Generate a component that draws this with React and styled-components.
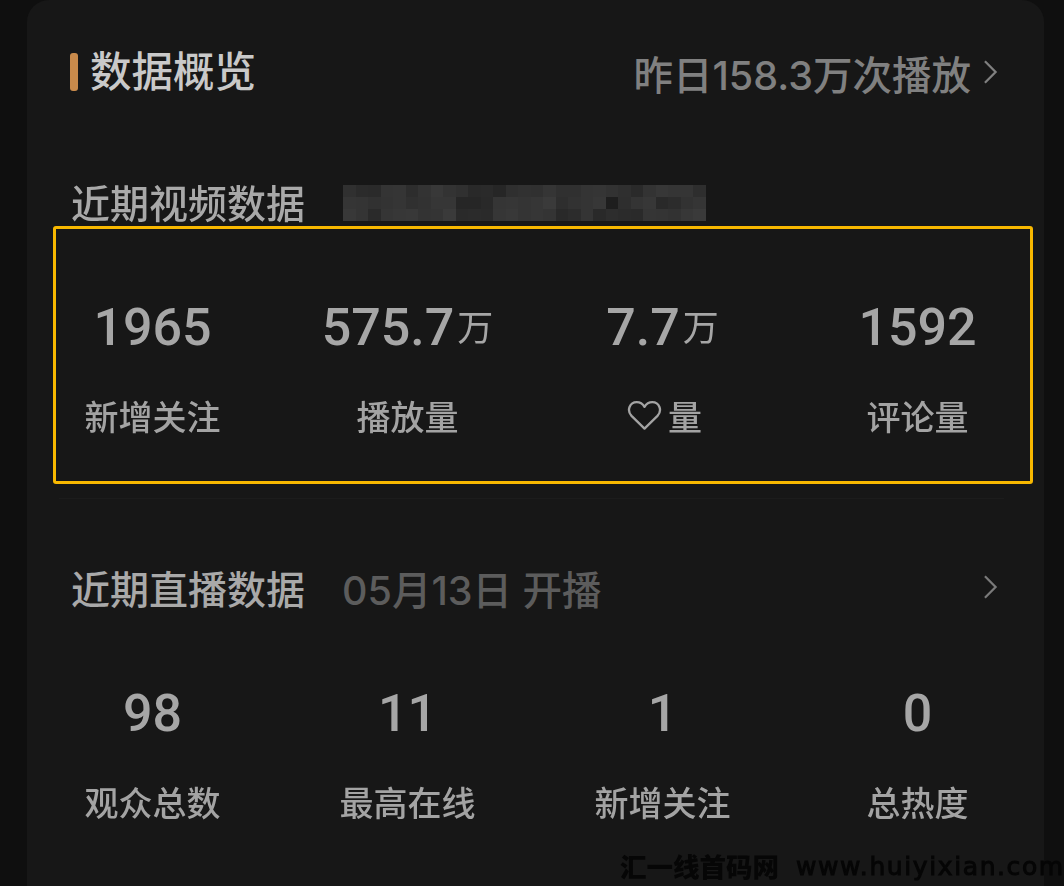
import styled, { createGlobalStyle } from "styled-components";

const GlobalStyle = createGlobalStyle`
  html, body {
    margin: 0;
    padding: 0;
    background: #0f0f0f;
  }
  body {
    font-family: "Inter", "Noto Sans CJK SC", sans-serif;
  }
`

const videoStats = [
  { value: "1965", label: "新增关注" },
  { value: "575.7", unit: "万", label: "播放量" },
  { value: "7.7", unit: "万", label: "量", heart: true },
  { value: "1592", label: "评论量" },
]

const liveStats = [
  { value: "98", label: "观众总数" },
  { value: "11", label: "最高在线" },
  { value: "1", label: "新增关注" },
  { value: "0", label: "总热度" },
]

// shades of the pixelated account name, 29 x 3 cells
const mosaic = [
  "302b2a34352d33383330292a262f31303530303435322f2a333735352e",
  "353431333530323636262629353634363a2e3234371e2e3437292c3235",
  "38342a3537383334 3a2a2b2a3638343634292c34292d2b2a353432373a",
]

const shades = mosaic.flatMap((row) => row.replace(/ /g, "").match(/../g).map((hex) => "#" + hex + hex + hex))

const Chevron = () => (
  <ChevronIcon viewBox="0 0 16 28" fill="none">
    <path d="M2 2.5 L13.5 14 L2 25.5" stroke="currentColor" strokeWidth="2.4" />
  </ChevronIcon>
)

const Heart = () => (
  <HeartIcon viewBox="0 0 36 32" fill="none">
    <path
      d="M18 29.5 L4.6 16.4 C-0.6 10.8 2.6 2.2 10 2.2 C13.4 2.2 16.2 4 18 7 C19.8 4 22.6 2.2 26 2.2 C33.4 2.2 36.6 10.8 31.4 16.4 Z"
      stroke="currentColor"
      strokeWidth="2.4"
      strokeLinejoin="round"
    />
  </HeartIcon>
)

const StatGrid = ({ items }) => (
  <Stats>
    {items.map(({ value, unit, label, heart }) => (
      <Stat key={label + value}>
        <Value>
          {value}
          {unit && <Unit>{unit}</Unit>}
        </Value>
        <Label>
          {heart && <Heart />}
          {label}
        </Label>
      </Stat>
    ))}
  </Stats>
)

const App = () => {
  return (
    <Page>
      <GlobalStyle />
      <Card>
        <Header>
          <Title>数据概览</Title>
          <Yesterday>
            昨日158.3万次播放
            <Chevron />
          </Yesterday>
        </Header>

        <VideoSection>
          <SectionHead>
            <SectionTitle>近期视频数据</SectionTitle>
            <Mosaic>
              {shades.map((shade, index) => (
                <MosaicCell key={index} $shade={shade} />
              ))}
            </Mosaic>
          </SectionHead>
          <StatGrid items={videoStats} />
          <Highlight />
        </VideoSection>

        <Divider />

        <LiveSection>
          <SectionHead>
            <SectionTitle>近期直播数据</SectionTitle>
            <LiveDate>05月13日 开播</LiveDate>
            <SectionArrow>
              <Chevron />
            </SectionArrow>
          </SectionHead>
          <StatGrid items={liveStats} />
        </LiveSection>

        <Watermark>
          <span>汇一线首码网</span>
          <span>www.huiyixian.com</span>
        </Watermark>
      </Card>
    </Page>
  )
}

export default App;


const Page = styled.div`
  width: 1064px;
  height: 886px;
  padding: 0 20px 0 27px;
  box-sizing: border-box;
  overflow: hidden;
  background: #0f0f0f;
`

const Card = styled.div`
  position: relative;
  height: 886px;
  box-sizing: border-box;
  background: #171717;
  border-radius: 22px 22px 0 0;
  padding-top: 45px;
  filter: blur(0.6px);
`

const Header = styled.div`
  display: flex;
  justify-content: space-between;
  align-items: center;
  height: 54px;
  padding: 0 46px 0 43px;
`

const Title = styled.h1`
  display: flex;
  align-items: center;
  margin: 0;
  font-size: 41.5px;
  font-weight: 500;
  line-height: 54px;
  color: #c9c9c9;
  &::before {
    content: "";
    width: 8px;
    height: 38px;
    margin-right: 12px;
    border-radius: 3px;
    background: #c98a4b;
  }
`

const Yesterday = styled.div`
  display: flex;
  align-items: center;
  gap: 12px;
  font-size: 39.5px;
  font-weight: 500;
  color: #808080;
`

const ChevronIcon = styled.svg`
  width: 15px;
  height: 26px;
  flex: none;
`

const VideoSection = styled.section`
  position: relative;
  margin-top: 77px;
`

const Divider = styled.div`
  height: 1px;
  margin: 58px 40px 0 32px;
  background: #1c1c1c;
`

const LiveSection = styled.section`
  margin-top: 63px;
`

const SectionHead = styled.div`
  display: flex;
  align-items: center;
  height: 50px;
  padding: 0 46px 0 44px;
`

const SectionTitle = styled.h2`
  margin: 0;
  font-size: 39px;
  font-weight: 500;
  color: #a9a9a9;
`

const Mosaic = styled.div`
  display: grid;
  grid-template-columns: repeat(29, 12.5px);
  grid-auto-rows: 12px;
  margin: 4px 0 0 38px;
`

const MosaicCell = styled.i`
  background: ${({ $shade }) => $shade};
`

const LiveDate = styled.span`
  margin-left: 37px;
  font-size: 39.5px;
  font-weight: 500;
  color: #5c5c5c;
`

const SectionArrow = styled.span`
  display: flex;
  margin-left: auto;
  color: #7a7a7a;
`

const Stats = styled.div`
  display: grid;
  grid-template-columns: repeat(4, 255px);
  margin-top: 71px;
  margin-left: -2px;
`

const Stat = styled.div`
  display: flex;
  flex-direction: column;
  align-items: center;
`

const Value = styled.div`
  display: flex;
  align-items: baseline;
  height: 62px;
  line-height: 62px;
  font-family: "Roboto", sans-serif;
  font-size: 52px;
  font-weight: 500;
  color: #a6a6a6;
`

const Unit = styled.span`
  margin-left: 3px;
  transform: translateY(-4px);
  font-family: "Noto Sans CJK SC", sans-serif;
  font-size: 36px;
  font-weight: 400;
`

const Label = styled.div`
  display: flex;
  align-items: center;
  height: 50px;
  margin-top: 31px;
  font-size: 34px;
  font-weight: 500;
  color: #a3a3a3;
`

const HeartIcon = styled.svg`
  width: 35px;
  height: 31px;
  margin: 0 6px 0 4px;
  color: #a3a3a3;
`

const Highlight = styled.div`
  position: absolute;
  box-sizing: border-box;
  left: 26px;
  right: 11px;
  top: 50px;
  height: 258px;
  border: 3px solid #f8b800;
  border-radius: 3px;
`

const Watermark = styled.div`
  position: absolute;
  left: 593px;
  bottom: 4px;
  display: flex;
  gap: 17px;
  white-space: nowrap;
  font-size: 26.5px;
  font-weight: 900;
  line-height: 30px;
  color: #060606;
  span:last-child {
    font-family: "DejaVu Sans", sans-serif;
    letter-spacing: 1.6px;
    font-size: 25px;
    font-weight: 400;
    -webkit-text-stroke: 1px #060606;
  }
`
